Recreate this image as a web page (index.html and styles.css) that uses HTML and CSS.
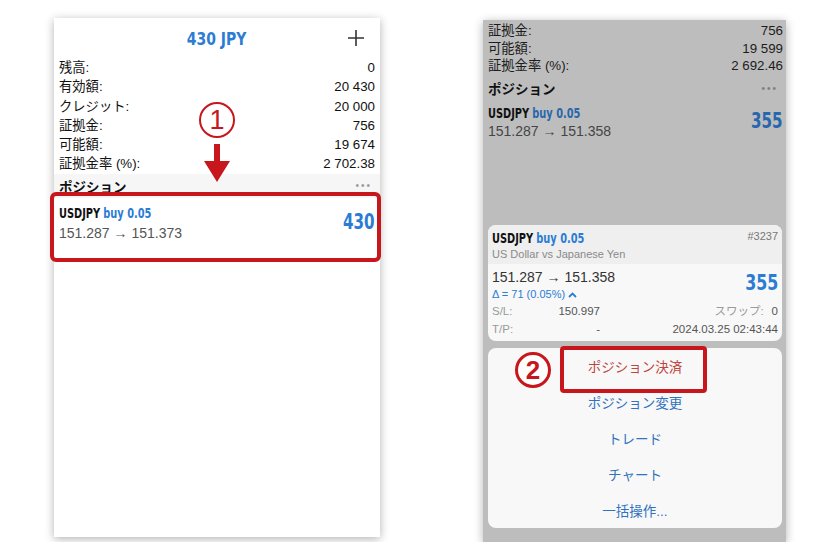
FILE: index.html
```html
<!DOCTYPE html>
<html lang="ja">
  <head>
    <meta charset="UTF-8" />
    <title>ポジション決済</title>
    <link rel="stylesheet" href="styles.css">
  </head>

  <body>
    <div class="stage">
      <!-- step 1: account screen -->
      <div class="phone phone-account">
        <div class="acc-head">
          <span></span>
          <span class="acc-title">430 JPY</span>
          <svg class="acc-add" width="18" height="18" viewBox="0 0 18 18">
            <path d="M9 1v16M1 9h16" stroke="#333" stroke-width="1.6" fill="none" />
          </svg>
        </div>

        <div class="rows">
          <div class="row"><span>残高:</span><span>0</span></div>
          <div class="row"><span>有効額:</span><span>20 430</span></div>
          <div class="row"><span>クレジット:</span><span>20 000</span></div>
          <div class="row"><span>証拠金:</span><span>756</span></div>
          <div class="row"><span>可能額:</span><span>19 674</span></div>
          <div class="row"><span>証拠金率 (%):</span><span>2 702.38</span></div>
        </div>

        <div class="section"><span>ポジション</span><span class="dots">•••</span></div>

        <div class="pos">
          <div class="pos-main">
            <div class="pos-title"><b>USDJPY</b> <span class="side">buy 0.05</span></div>
            <div class="pos-price">151.287 → 151.373</div>
          </div>
          <div class="pos-profit">430</div>
          <div class="mark-box mark-pos"></div>
        </div>

        <div class="step step-one">
          <span class="step-num">1</span>
          <svg width="26" height="38" viewBox="0 0 26 38">
            <path d="M10 0h6v17h10L13 38 0 17h10z" fill="#c8161d" />
          </svg>
        </div>
      </div>

      <!-- step 2: position menu -->
      <div class="phone phone-menu">
        <div class="rows dim-rows">
          <div class="row"><span>証拠金:</span><span>756</span></div>
          <div class="row"><span>可能額:</span><span>19 599</span></div>
          <div class="row"><span>証拠金率 (%):</span><span>2 692.46</span></div>
        </div>
        <div class="section dim-section"><span>ポジション</span><span class="dots">•••</span></div>
        <div class="pos dim-pos">
          <div class="pos-main">
            <div class="pos-title"><b>USDJPY</b> <span class="side">buy 0.05</span></div>
            <div class="pos-price">151.287 → 151.358</div>
          </div>
          <div class="pos-profit">355</div>
        </div>

        <div class="spacer"></div>

        <div class="card">
          <div class="card-head">
            <div>
              <div class="pos-title"><b>USDJPY</b> <span class="side">buy 0.05</span></div>
              <div class="card-sub">US Dollar vs Japanese Yen</div>
            </div>
            <div class="ticket">#3237</div>
          </div>
          <div class="card-body">
            <div class="card-top">
              <div>
                <div class="card-price">151.287 → 151.358</div>
                <div class="card-delta">Δ = 71 (0.05%)
                  <svg width="9" height="6" viewBox="0 0 9 6"><path d="M1 5l3.5-3.5L8 5" stroke="#2b7cd3" stroke-width="1.8" fill="none" /></svg>
                </div>
              </div>
              <div class="pos-profit card-profit">355</div>
            </div>
            <div class="detail">
              <div class="half"><span class="lbl">S/L:</span><span class="val">150.997</span></div>
              <div class="half right"><span class="lbl">スワップ:</span><span class="val">0</span></div>
            </div>
            <div class="detail">
              <div class="half"><span class="lbl">T/P:</span><span class="val">-</span></div>
              <div class="half right"><span class="val">2024.03.25 02:43:44</span></div>
            </div>
          </div>
        </div>

        <div class="menu">
          <div class="menu-item danger">ポジション決済</div>
          <div class="menu-item">ポジション変更</div>
          <div class="menu-item">トレード</div>
          <div class="menu-item">チャート</div>
          <div class="menu-item">一括操作...</div>
          <div class="mark-box mark-close"></div>
          <div class="step-two">2</div>
        </div>
      </div>
    </div>
  </body>
</html>
```

FILE: styles.css
```css
* {
  margin: 0;
  padding: 0;
  box-sizing: border-box;
}

body {
  background: #fff;
  font-family: "Liberation Sans", "Noto Sans CJK JP", sans-serif;
  color: #111;
}

.stage {
  display: flex;
  align-items: flex-start;
  gap: 103px;
  padding: 18px 0 0 54px;
}

.phone {
  position: relative;
  display: flex;
  flex-direction: column;
  box-shadow: 0 2px 9px rgba(0, 0, 0, 0.3);
}

.phone-account {
  width: 326px;
  height: 519px;
  background: #fff;
}

.phone-menu {
  width: 303px;
  height: 522px;
  margin-top: 2px;
  background: #bdbdbd;
  padding-bottom: 14px;
}

/* narrow bold face used by the app for symbols and amounts */
.acc-title,
.pos-title,
.pos-profit {
  font-family: "DejaVu Sans Condensed", "DejaVu Sans", sans-serif;
  font-stretch: condensed;
}

/* header */
.acc-head {
  height: 40px;
  display: grid;
  grid-template-columns: 1fr auto 1fr;
  align-items: center;
}

.acc-title {
  font-weight: bold;
  font-size: 18px;
  color: #2b7cd3;
  transform: scaleX(0.86);
}

.acc-add {
  justify-self: end;
  margin-right: 15px;
}

/* account rows */
.rows {
  padding: 0 5px;
  font-size: 13.3px;
}

.row {
  display: flex;
  justify-content: space-between;
  line-height: 19.3px;
}

.section {
  display: flex;
  justify-content: space-between;
  align-items: center;
  height: 24px;
  padding: 0 8px 0 5px;
  background: #f6f6f6;
  font-size: 13.5px;
  font-weight: bold;
}

.dots {
  color: #9a9a9a;
  font-size: 10px;
  letter-spacing: 2px;
  font-weight: normal;
}

/* position row */
.pos {
  position: relative;
  display: flex;
  justify-content: space-between;
  align-items: center;
  padding: 6px 6px 14px 5px;
}

.pos-title {
  font-size: 14px;
  line-height: 18px;
  white-space: nowrap;
  transform: scaleX(0.78);
  transform-origin: left center;
}

.pos-title b {
  color: #111;
}

.side {
  font-weight: bold;
  color: #2b7cd3;
}

.pos-price {
  margin-top: 3px;
  font-size: 14px;
  color: #555;
}

.pos-profit {
  font-weight: bold;
  font-size: 21px;
  color: #2b7cd3;
  transform: scaleX(0.8);
  transform-origin: right center;
}

/* annotations */
.mark-box {
  position: absolute;
  border: 4px solid #c8161d;
  border-radius: 6px;
}

.mark-pos {
  left: -4px;
  top: -6px;
  width: 331px;
  height: 70px;
}

.step {
  position: absolute;
  display: flex;
  flex-direction: column;
  align-items: center;
  gap: 6px;
}

.step-one {
  left: 145px;
  top: 84px;
}

.step-num {
  display: flex;
  align-items: center;
  justify-content: center;
  width: 36px;
  height: 36px;
  border: 2.5px solid #c8161d;
  border-radius: 50%;
  color: #c8161d;
  font-size: 27px;
}

/* dimmed list behind the sheet */
.dim-rows {
  padding: 2px 3px 0 5px;
  color: #1c1c1c;
}

.dim-rows .row {
  line-height: 17.5px;
}

.dim-section {
  height: 27px;
  background: transparent;
  padding-right: 8px;
}

.dim-section .dots {
  color: #7e7e7e;
}

.dim-pos {
  padding: 2px 4px 0 5px;
}

.dim-pos .pos-price {
  margin-top: 1px;
  color: #454545;
}

.dim-pos .side,
.dim-pos .pos-profit {
  color: #2866ad;
}

.spacer {
  flex: 1;
}

/* position card */
.card {
  margin: 0 4px 0 5px;
  border-radius: 8px;
  overflow: hidden;
  background: #f8f8f8;
}

.card-head {
  display: flex;
  justify-content: space-between;
  height: 39px;
  padding: 4px 4px 0 4px;
  background: #efefef;
}

.card-sub {
  font-size: 11px;
  color: #8a8a8a;
  line-height: 15px;
}

.ticket {
  font-size: 11px;
  color: #777;
  line-height: 15px;
}

.card-body {
  padding: 4px 4px 3px 4px;
  font-size: 11.5px;
}

.card-top {
  display: flex;
  justify-content: space-between;
  align-items: center;
}

.card-price {
  font-size: 14px;
  line-height: 18px;
  color: #333;
}

.card-delta {
  line-height: 16px;
  font-size: 11px;
  color: #2b7cd3;
}

.card-profit {
  font-size: 22px;
  padding-bottom: 6px;
}

.detail {
  display: flex;
  line-height: 18px;
}

.half {
  display: flex;
  justify-content: space-between;
  width: 108px;
}

.half.right {
  flex: 1;
  justify-content: flex-end;
  gap: 8px;
}

.lbl {
  color: #9a9a9a;
}

.val {
  color: #555;
}

/* action menu */
.menu {
  position: relative;
  margin: 7px 4px 0 5px;
  border-radius: 8px;
  background: #f8f8f8;
}

.menu-item {
  height: 36px;
  display: flex;
  align-items: center;
  justify-content: center;
  font-size: 13.5px;
  color: #2f72bd;
}

.menu-item.danger {
  color: #c0453e;
}

.mark-close {
  left: 72px;
  top: -2px;
  width: 147px;
  height: 47px;
  border-width: 4.5px;
  border-radius: 4px;
}

.step-two {
  position: absolute;
  left: 27px;
  top: 4px;
  width: 36px;
  height: 36px;
  display: flex;
  align-items: center;
  justify-content: center;
  border: 3.5px solid #c8161d;
  border-radius: 50%;
  background: #fff;
  color: #c8161d;
  font-size: 26px;
  font-weight: bold;
}
```
